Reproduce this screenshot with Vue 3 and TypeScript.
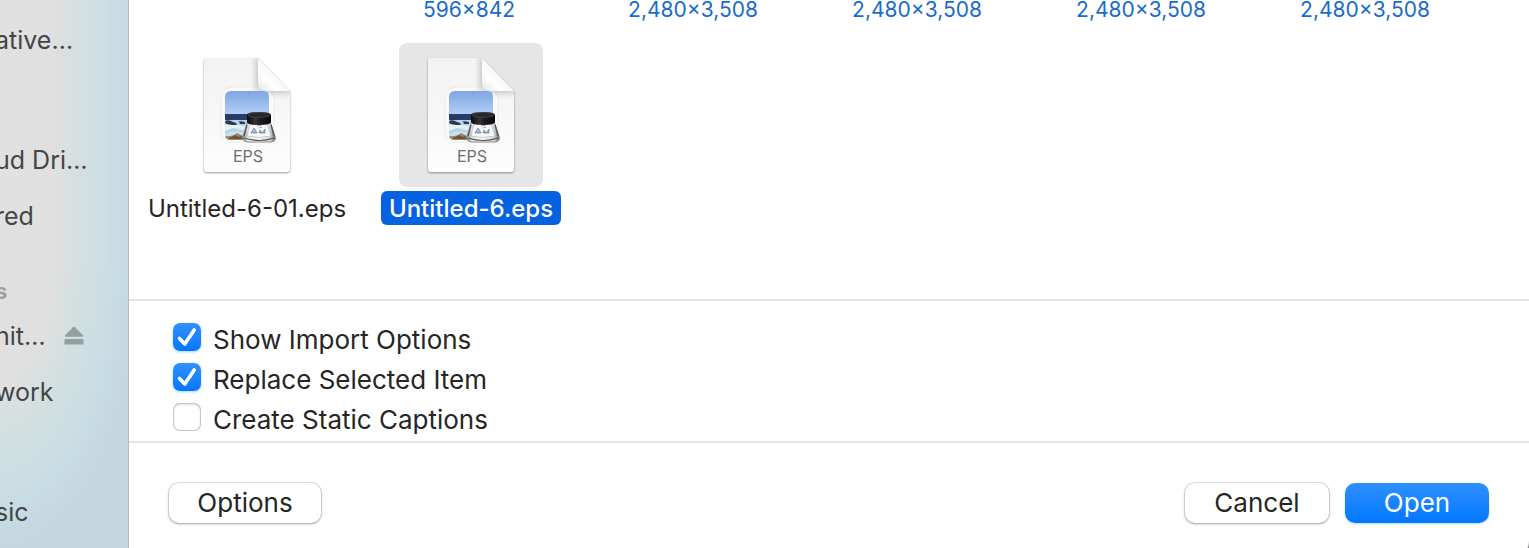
<script setup lang="ts">
import { ref } from 'vue'

interface SidebarItem {
  label: string
  ejectable?: boolean
}
interface SidebarGroup {
  heading: string
  items: SidebarItem[]
}

const groups: SidebarGroup[] = [
  { heading: '', items: [{ label: 'ative…' }] },
  { heading: '', items: [{ label: 'ud Dri…' }, { label: 'red' }] },
  { heading: 's', items: [{ label: 'nit…', ejectable: true }, { label: 'work' }] },
  { heading: '', items: [{ label: 'sic' }] },
]

const dimensions: string[] = ['', '596×842', '2,480×3,508', '2,480×3,508', '2,480×3,508', '2,480×3,508']
const files: string[] = ['Untitled-6-01.eps', 'Untitled-6.eps']
const selected = ref('Untitled-6.eps')

const options = ref([
  { id: 'show-import', label: 'Show Import Options', checked: true },
  { id: 'replace-item', label: 'Replace Selected Item', checked: true },
  { id: 'static-captions', label: 'Create Static Captions', checked: false },
])
</script>

<template>
  <div class="dialog">
    <nav class="sidebar">
      <section v-for="(group, g) in groups" :key="g" class="group">
        <h2 class="heading">{{ group.heading }}</h2>
        <ul class="places">
          <li v-for="item in group.items" :key="item.label" class="place">
            <a href="#" class="place-link">{{ item.label }}</a>
            <button v-if="item.ejectable" type="button" class="eject" aria-label="Eject">
              <svg width="20" height="20" viewBox="0 0 20 20" fill="#93a0a1">
                <path d="M9 1.2Q10 .4 11 1.2L18.8 9Q19.6 10.6 18.2 10.8H1.8Q.4 10.6 1.2 9Z" />
                <rect x=".5" y="13" width="19" height="5.6" rx="1.2" />
              </svg>
            </button>
          </li>
        </ul>
      </section>
    </nav>

    <main class="content">
      <div class="browser">
        <div class="grid sizes">
          <span v-for="(size, i) in dimensions" :key="i" class="size">{{ size }}</span>
        </div>
        <div class="grid">
          <button
            v-for="(file, i) in files"
            :key="file"
            type="button"
            class="file"
            :class="{ selected: file === selected }"
            @click="selected = file"
          >
            <span class="tile">
              <svg class="doc" width="96" height="120" viewBox="0 0 96 120">
                <defs>
                  <linearGradient :id="'paper' + i" x1="0" y1="0" x2="0" y2="1">
                    <stop offset="0" stop-color="#f3f3f3" />
                    <stop offset=".5" stop-color="#f7f7f7" />
                    <stop offset="1" stop-color="#fdfdfd" />
                  </linearGradient>
                  <linearGradient :id="'fold' + i" x1="0" y1="1" x2=".75" y2=".25">
                    <stop offset="0" stop-color="#e4e4e4" />
                    <stop offset=".4" stop-color="#fff" />
                    <stop offset="1" stop-color="#ededed" />
                  </linearGradient>
                  <linearGradient :id="'sky' + i" x1="0" y1="0" x2="0" y2="1">
                    <stop offset="0" stop-color="#7fa5e4" />
                    <stop offset="1" stop-color="#b3cff6" />
                  </linearGradient>
                  <linearGradient :id="'cap' + i" x1="0" y1="0" x2="1" y2="0">
                    <stop offset="0" stop-color="#0b0b0c" />
                    <stop offset=".35" stop-color="#333" />
                    <stop offset=".6" stop-color="#17181a" />
                    <stop offset="1" stop-color="#08080a" />
                  </linearGradient>
                  <linearGradient :id="'glass' + i" x1="0" y1="0" x2="1" y2="0">
                    <stop offset="0" stop-color="#777" />
                    <stop offset=".16" stop-color="#e6e6e4" />
                    <stop offset=".5" stop-color="#fafafa" />
                    <stop offset=".84" stop-color="#d6d6d2" />
                    <stop offset="1" stop-color="#5c5c5a" />
                  </linearGradient>
                  <clipPath :id="'photo' + i">
                    <path d="M32 35H64Q70 35 70 41V84H32Q26 84 26 78V41Q26 35 32 35Z" />
                  </clipPath>
                  <clipPath :id="'page' + i">
                    <path d="M8 2H59L91 35V113Q91 116 88 116H8Q5 116 5 113V5Q5 2 8 2Z" />
                  </clipPath>
                  <filter :id="'soft' + i" x="-30%" y="-30%" width="160%" height="160%">
                    <feGaussianBlur stdDeviation="3" />
                  </filter>
                </defs>
                <path class="page" d="M8 2H59L91 35V113Q91 116 88 116H8Q5 116 5 113V5Q5 2 8 2Z" :fill="`url(#paper${i})`" />
                <rect x="22" y="31" width="53" height="55" rx="11" fill="#fafafa" stroke="#ebebeb" />
                <g :clip-path="`url(#page${i})`">
                  <path d="M57 2V30Q57 37 64 37H93V30L60 0Z" fill="#777" opacity=".4" :filter="`url(#soft${i})`" />
                </g>
                <g :clip-path="`url(#photo${i})`">
                  <rect x="26" y="35" width="44" height="24" :fill="`url(#sky${i})`" />
                  <rect x="26" y="58" width="44" height="7" fill="#283b6b" />
                  <rect x="26" y="64" width="44" height="20" fill="#b5d3e8" />
                  <path d="M26 67Q33 65 39 69L50 71 47 75 34 72 26 75Z" fill="#e2f0f7" />
                  <path d="M26 65Q30 63 34 66L37 67 38 69 33 69 27 68ZM40 65 46 66 46 68 41 68Z" fill="#303746" />
                  <path d="M26 78Q35 73 49 77V84H26Z" fill="#c9e2ef" />
                  <path d="M26 80Q33 81 38 77L44 80 48 84H26Z" fill="#a4805c" />
                  <path d="M30 82 36 79 39 81 42 80 45 83H30Z" fill="#685640" />
                </g>
                <path d="M59 2V28Q59 35 66 35H91Z" :fill="`url(#fold${i})`" />
                <path d="M49 65H71L76 80Q78 85 72 86H49Q42 85 44 80Z" :fill="`url(#glass${i})`" stroke="#8b8b88" />
                <path d="M51 67H68L72 80Q60 83 48 80Z" fill="#f6f8fb" stroke="#b5b6b8" stroke-width=".7" />
                <path d="M45 82Q60 87 75 82M48 69 45 80M72 69 75 80" fill="none" stroke="#555" stroke-width="1.200" />
                <path d="M58 70 63 69M60 72 63 71M52 77 55 72 58 77ZM60 77 61 74 63 77 66 73V77Z" fill="#9bbce4" stroke="#6f7981" stroke-width=".7" />
                <path d="M48 59Q48 56 60 56T72 59V66Q72 69 60 69T48 66Z" :fill="`url(#cap${i})`" />
                <ellipse cx="60" cy="59" rx="11" ry="2.300" fill="#252629" stroke="#606164" stroke-width=".5" />
                <text x="49" y="106" text-anchor="middle" class="kind">EPS</text>
              </svg>
            </span>
            <span class="name">{{ file }}</span>
          </button>
        </div>
      </div>

      <div class="options">
        <label v-for="option in options" :key="option.id" class="option" :for="option.id">
          <input :id="option.id" v-model="option.checked" type="checkbox" class="sr-box" />
          <span class="box">
            <svg v-if="option.checked" width="28" height="28" viewBox="0 0 28 28">
              <path d="M6.500 15.500 11.800 21 21.200 7" fill="none" stroke="#fff" stroke-width="3.600" stroke-linecap="round" stroke-linejoin="round" />
            </svg>
          </span>
          <span class="option-label">{{ option.label }}</span>
        </label>
      </div>

      <footer class="footer">
        <button type="button" class="btn wide">Options</button>
        <span class="spacer"></span>
        <button type="button" class="btn">Cancel</button>
        <button type="button" class="btn primary">Open</button>
      </footer>
    </main>
  </div>
</template>

<style>
body {
  background: #8a8a8a;
}
</style>

<style scoped>
.dialog {
  display: flex;
  min-height: 100vh;
  overflow: hidden;
  border-bottom-right-radius: 2px 8px;
  background: #fff;
  font-family: Inter, 'Liberation Sans', sans-serif;
  font-size: 26px;
  color: #262626;
}
.sidebar {
  box-sizing: border-box;
  flex: 0 0 129px;
  overflow: hidden;
  border-right: 1px solid #b4b9bc;
  font-size: 25px;
  color: #434647;
  background:
    linear-gradient(90deg, #e1e1e1 0%, #e0e0e0 42%, #d5dfdf 62%, #cddfe2 80%, #c8dae3 94%, #c8dae2 100%) 0 0 / 100% 270px no-repeat,
    radial-gradient(132px 270px at 0 270px, #e1e0e1 0%, #e0e0e0 40%, #d3dfdf 60%, #cbdfe4 77%, #c5d8e2 100%);
}
.group {
  margin-left: -5px;
}
.heading {
  box-sizing: border-box;
  height: 64px;
  margin: 0;
  padding-top: 33px;
  font-size: 22px;
  line-height: 28px;
  font-weight: 700;
  color: #9fa0a1;
}
.group:first-child .heading {
  height: 12px;
  padding: 0;
}
.places {
  margin: 0;
  padding: 0;
  list-style: none;
}
.place {
  display: flex;
  align-items: center;
  justify-content: space-between;
  height: 56px;
  padding-right: 44px;
}
.place-link {
  color: inherit;
  text-decoration: none;
  white-space: nowrap;
}
.eject {
  display: flex;
  padding: 0;
  border: 0;
  background: none;
}
.content {
  display: flex;
  flex: 1;
  flex-direction: column;
  min-width: 0;
}
.browser {
  flex: 1;
  padding-left: 6px;
  overflow: hidden;
}
.grid {
  display: grid;
  grid-template-columns: repeat(auto-fill, 224px);
}
.sizes {
  padding-bottom: 20px;
}
.size {
  height: 23px;
  padding-right: 4px;
  font-size: 21px;
  line-height: 20px;
  text-align: center;
  color: #1a6bce;
}
.file {
  display: flex;
  flex-direction: column;
  align-items: center;
  gap: 4px;
  padding: 0;
  border: 0;
  background: none;
  color: inherit;
  font: inherit;
  font-size: 24px;
}
.tile {
  display: flex;
  justify-content: center;
  box-sizing: border-box;
  width: 144px;
  height: 144px;
  padding-top: 13px;
  border-radius: 8px;
}
.page {
  filter: drop-shadow(0 1px 1px rgba(0, 0, 0, 0.4));
}
.kind {
  font-size: 16px;
  fill: #6e6e6e;
}
.name {
  box-sizing: border-box;
  height: 34px;
  padding: 1px 8px 0;
  border-radius: 6px;
  line-height: 34px;
  white-space: nowrap;
}
.selected .tile {
  background: #e6e6e6;
}
.selected .name {
  background: #0562e0;
  color: #fff;
  font-weight: 500;
}
.options {
  padding: 16px 44px 4px;
  border-top: 2px solid #e5e5e5;
  border-bottom: 2px solid #e5e5e5;
}
.option {
  display: flex;
  align-items: center;
  gap: 12px;
  width: fit-content;
  height: 40px;
}
.sr-box {
  position: absolute;
  width: 28px;
  height: 28px;
  margin: 0;
  opacity: 0;
}
.box {
  box-sizing: border-box;
  width: 28px;
  height: 28px;
  border-radius: 7px;
  background: #fff;
  box-shadow: inset 0 0 0 1px #c8c8c8, inset 0 1px 3px rgba(0, 0, 0, 0.25);
}
.sr-box:checked + .box {
  background: linear-gradient(#3191ff, #0577fd);
  box-shadow: 0 1px 3px rgba(30, 150, 255, 0.4);
}
.box svg {
  display: block;
}
.option-label {
  padding-top: 4px;
}
.footer {
  display: flex;
  gap: 16px;
  padding: 40px 40px 25px;
}
.spacer {
  flex: 1;
}
.btn {
  width: 144px;
  height: 40px;
  padding: 0 0 2px;
  border: 0;
  border-radius: 10px;
  background: #fff;
  box-shadow: 0 0 0 1px rgba(0, 0, 0, 0.1), 0 1px 3px rgba(0, 0, 0, 0.3);
  color: #262626;
  font: inherit;
}
.wide {
  width: 152px;
}
.primary {
  background: linear-gradient(#2f90ff, #0278ff);
  box-shadow: 0 1px 2px rgba(0, 120, 255, 0.3);
  color: #fff;
}
</style>
